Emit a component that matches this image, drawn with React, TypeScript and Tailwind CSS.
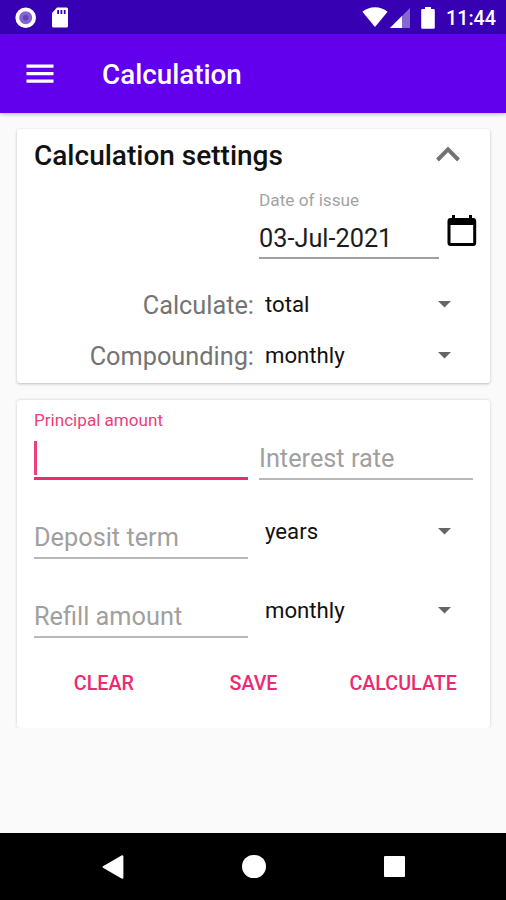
import type { ReactNode } from 'react';
import { clsx } from 'clsx';

function StatusBar() {
  return (
    <div className="flex h-[34px] items-center bg-[#3700b3] pr-[10px] pl-[15px] text-white">
      <svg width="21" height="21" viewBox="0 0 21 21">
        <circle cx="10.7" cy="10.7" r="8.4" fill="#8465cf" stroke="#fff" strokeWidth="3.8" />
        <circle cx="10.7" cy="10.7" r="2.8" fill="#6541bd" />
      </svg>
      <svg className="ml-[15px]" width="18" height="21" viewBox="0 0 18 21">
        <path d="M6 0.5h9.5a1.5 1.5 0 0 1 1.5 1.5v17a1.5 1.5 0 0 1-1.5 1.5h-13A1.5 1.5 0 0 1 1 19V6z" fill="#fff" />
        <path d="M6.2 3h1.8v4H6.2zM9.5 3h1.8v4H9.5zM12.8 3h1.8v4h-1.8z" fill="#3700b3" />
      </svg>
      <svg className="ml-auto" width="26" height="20" viewBox="0 0 26 20">
        <path d="M0.4 4.8C4 1.8 8.2 0.2 13 0.2s9 1.6 12.6 4.6L13 20z" fill="#fff" />
      </svg>
      <svg className="mt-px ml-[2px]" width="20" height="20" viewBox="0 0 20 20">
        <path d="M0 20L20 0v20z" fill="#fff" fillOpacity="0.4" />
        <path d="M0 20L12 8v12z" fill="#fff" />
      </svg>
      <svg className="mt-px ml-[11px]" width="14" height="22" viewBox="0 0 14 22">
        <path d="M4 0h6v2h2.6A1.2 1.2 0 0 1 13.8 3.2v17.4a1.2 1.2 0 0 1-1.2 1.2H1.4a1.2 1.2 0 0 1-1.2-1.2V3.2A1.2 1.2 0 0 1 1.4 2H4z" fill="#fff" />
      </svg>
      <span className="ml-[11px] pt-[3px] text-[19.7px] leading-none font-medium">11:44</span>
    </div>
  );
}

function AppBar() {
  return (
    <header className="relative flex h-[79px] items-center bg-[#6200ee] pl-[26px] text-white shadow-[0_1px_4px_rgba(0,0,0,0.3)]">
      <svg width="28" height="20" viewBox="0 0 28 20" fill="#fff">
        <path d="M0.5 0.5h27v3.3h-27zM0.5 8h27v3.3h-27zM0.5 15.5h27v3.3h-27z" />
      </svg>
      <h1 className="ml-[48px] pt-[3px] text-[27.8px] leading-none font-medium">Calculation</h1>
    </header>
  );
}

function Card({ className, children }: { className?: string; children: ReactNode }) {
  return (
    <section className={clsx('mr-[16px] ml-[17px] rounded-[3px] bg-white px-[17px]', className)}>
      {children}
    </section>
  );
}

function Spinner({ value }: { value: string }) {
  return (
    <div className="flex h-[51px] w-[214px] items-center justify-between pr-[22px] pl-[6px]">
      <span className="text-[22.2px] leading-none text-[#111]">{value}</span>
      <svg width="13" height="7" viewBox="0 0 13 7">
        <path d="M0 0h13L6.5 6.5z" fill="#666" />
      </svg>
    </div>
  );
}

function SettingRow({ label, value }: { label: string; value: string }) {
  return (
    <div className="flex h-[51px] items-center justify-between">
      <span className="w-[220px] pt-[2px] text-right text-[25.3px] leading-none text-[#747474]">{label}</span>
      <Spinner value={value} />
    </div>
  );
}

function Field({ label, focused }: { label: string; focused?: boolean }) {
  if (focused) {
    return (
      <div className="flex h-[80px] w-[214px] flex-col border-b-[3px] border-[#ec2a70] pt-[10px]">
        <span className="text-[17.1px] leading-5 text-[#ec407a]">{label}</span>
        <span className="mt-[11px] h-[34px] w-[3px] bg-[#ec407a]" />
      </div>
    );
  }
  return (
    <div className="flex h-[79px] w-[214px] flex-col justify-end border-b-2 border-[#b8b8b8]">
      <span className="h-[38px] pt-[6px] text-[25.3px] leading-[26px] text-[#a0a0a0]">{label}</span>
    </div>
  );
}

function NavBar() {
  return (
    <nav className="flex h-[67px] items-center bg-black">
      <svg className="ml-[102px]" width="22" height="24" viewBox="0 0 22 24">
        <path d="M1 11.2L19.5 0.4Q21.4-0.2 21.4 1.6V22.4Q21.4 24.2 19.5 23.6L1 12.8Q0 12 1 11.2z" fill="#fff" />
      </svg>
      <span className="ml-[118px] size-[23.5px] rounded-full bg-white" />
      <span className="ml-[118px] size-[21px] rounded-[1px] bg-white" />
    </nav>
  );
}

const actions = ['CLEAR', 'SAVE', 'CALCULATE'];

export default function App() {
  return (
    <div className="flex h-[900px] w-[506px] flex-col overflow-hidden bg-[#fafafa] font-['Roboto',sans-serif]">
      <StatusBar />
      <AppBar />

      <main className="flex-1 pt-[16px]">
        <Card className="h-[254px] shadow-[0_1px_3px_rgba(0,0,0,0.25)]">
          <div className="flex h-[54px] items-center justify-between">
            <h2 className="text-[28px] leading-none font-medium text-[#111]">Calculation settings</h2>
            <svg className="mr-[13px] mb-[4px]" width="24" height="16" viewBox="0 0 24 16" fill="none" stroke="#737373" strokeWidth="4">
              <path d="M1.5 14L12 3.4L22.5 14" />
            </svg>
          </div>

          <div className="ml-[225px] flex h-[76px]">
            <div className="flex w-[180px] shrink-0 flex-col border-b-2 border-[#a0a0a0] pt-[7px]">
              <span className="text-[17.2px] leading-5 text-[#a3a3a3]">Date of issue</span>
              <span className="mt-[16px] text-[25.3px] leading-[26px] text-[#1c1c1c]">03-Jul-2021</span>
            </div>
            <svg className="mt-[31px] ml-[8px] shrink-0" width="30" height="33" viewBox="0 0 30 33">
              <path d="M5 1h3v3h14V1h3v3h1.5A3 3 0 0 1 29.2 7v22a3 3 0 0 1-3 3H3.5a3 3 0 0 1-3-3V7a3 3 0 0 1 3-3H5zM3.5 11v18h22.7V11z" fill="#000" fillRule="evenodd" />
            </svg>
          </div>

          <div className="pt-[20px]">
            <SettingRow label="Calculate:" value="total" />
            <SettingRow label="Compounding:" value="monthly" />
          </div>
        </Card>

        <Card className="mt-[17px] h-[328px] shadow-[0_0_3px_rgba(0,0,0,0.2)] [clip-path:inset(-3px_-4px_0_-4px)]">
          <div className="flex h-[80px] justify-between">
            <Field label="Principal amount" focused />
            <div className="pt-px">
              <Field label="Interest rate" />
            </div>
          </div>
          <div className="flex h-[79px] items-end justify-between">
            <Field label="Deposit term" />
            <div className="h-[53px]">
              <Spinner value="years" />
            </div>
          </div>
          <div className="flex h-[79px] items-end justify-between">
            <Field label="Refill amount" />
            <div className="h-[53px]">
              <Spinner value="monthly" />
            </div>
          </div>
          <div className="-mx-[5px] mt-[20px] grid grid-cols-3">
            {actions.map((a) => (
              <button key={a} className="h-[51px] text-[19.7px] font-medium text-[#ec2a70]">
                {a}
              </button>
            ))}
          </div>
        </Card>
      </main>

      <NavBar />
    </div>
  );
}
